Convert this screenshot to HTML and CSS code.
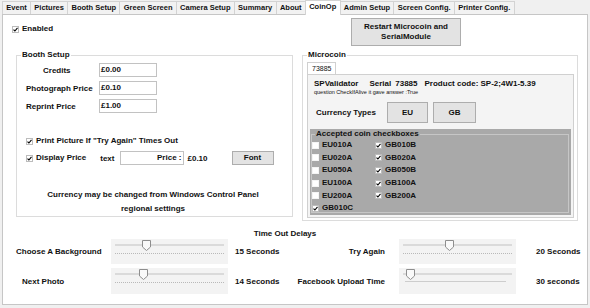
FILE: index.html
```html
<!DOCTYPE html>
<html lang="en">
<head>
    <meta charset="UTF-8">
    <title>CoinOp</title>
    <link rel="stylesheet" href="styles.css">
</head>
<body>
    <div class="tabs">
        <div class="tab">Event</div>
        <div class="tab">Pictures</div>
        <div class="tab">Booth Setup</div>
        <div class="tab">Green Screen</div>
        <div class="tab">Camera Setup</div>
        <div class="tab">Summary</div>
        <div class="tab">About</div>
        <div class="tab active">CoinOp</div>
        <div class="tab">Admin Setup</div>
        <div class="tab">Screen Config.</div>
        <div class="tab">Printer Config.</div>
    </div>

    <div class="page">
        <div class="top">
            <label class="check enabled"><span class="cb"><svg viewBox="0 0 5 5"><path d="M0.5 2.6 L1.9 4 L4.5 0.8"/></svg></span>Enabled</label>
            <button class="btn restart">Restart Microcoin and<br>SerialModule</button>

            <fieldset class="group booth">
                <legend>Booth Setup</legend>
                <div class="booth-body">
                    <div class="prices">
                        <span class="lbl credits">Credits</span><div class="input">£0.00</div>
                        <span class="lbl">Photograph Price</span><div class="input">£0.10</div>
                        <span class="lbl">Reprint Price</span><div class="input">£1.00</div>
                    </div>
                    <label class="check timeout"><span class="cb"><svg viewBox="0 0 5 5"><path d="M0.5 2.6 L1.9 4 L4.5 0.8"/></svg></span>Print Picture If "Try Again" Times Out</label>
                    <div class="display-row">
                        <label class="check"><span class="cb"><svg viewBox="0 0 5 5"><path d="M0.5 2.6 L1.9 4 L4.5 0.8"/></svg></span>Display Price</label>
                        <span class="text-lbl">text</span>
                        <div class="input price-text">Price :</div>
                        <span class="price-val">£0.10</span>
                        <button class="btn font-btn">Font</button>
                    </div>
                    <p class="note">Currency may be changed from Windows Control Panel<br>regional settings</p>
                </div>
            </fieldset>

            <fieldset class="group microcoin">
                <legend>Microcoin</legend>
                <div class="subtabs"><div class="subtab">73885</div></div>
                <div class="subpage">
                    <div class="validator">
                        <span>SPValidator</span>
                        <span class="serial">Serial</span>
                        <span class="serial-no">73885</span>
                        <span class="product">Product code: SP-2;4W1-5.39</span>
                    </div>
                    <div class="status">question CheckIfAlive it gave answer :True</div>
                    <div class="currency">
                        <span class="cur-lbl">Currency Types</span>
                        <button class="btn cur eu">EU</button>
                        <button class="btn cur gb">GB</button>
                    </div>
                    <div class="coins">
                        <fieldset class="coin-group">
                            <legend>Accepted coin checkboxes</legend>
                            <div class="coin-grid">
                                <label class="check"><span class="cb off"></span>EU010A</label>
                                <label class="check"><span class="cb"><svg viewBox="0 0 5 5"><path d="M0.5 2.6 L1.9 4 L4.5 0.8"/></svg></span>GB010B</label>
                                <label class="check"><span class="cb off"></span>EU020A</label>
                                <label class="check"><span class="cb"><svg viewBox="0 0 5 5"><path d="M0.5 2.6 L1.9 4 L4.5 0.8"/></svg></span>GB020A</label>
                                <label class="check"><span class="cb off"></span>EU050A</label>
                                <label class="check"><span class="cb"><svg viewBox="0 0 5 5"><path d="M0.5 2.6 L1.9 4 L4.5 0.8"/></svg></span>GB050B</label>
                                <label class="check"><span class="cb off"></span>EU100A</label>
                                <label class="check"><span class="cb"><svg viewBox="0 0 5 5"><path d="M0.5 2.6 L1.9 4 L4.5 0.8"/></svg></span>GB100A</label>
                                <label class="check"><span class="cb off"></span>EU200A</label>
                                <label class="check"><span class="cb"><svg viewBox="0 0 5 5"><path d="M0.5 2.6 L1.9 4 L4.5 0.8"/></svg></span>GB200A</label>
                                <label class="check"><span class="cb"><svg viewBox="0 0 5 5"><path d="M0.5 2.6 L1.9 4 L4.5 0.8"/></svg></span>GB010C</label>
                            </div>
                        </fieldset>
                    </div>
                </div>
            </fieldset>
        </div>

        <div class="delays-title">Time Out Delays</div>
        <div class="delay-grid">
            <span>Choose A Background</span>
            <div class="slider">
                <div class="track"></div>
                <div class="ticks"></div>
                <svg class="thumb" style="left: 31px" viewBox="0 0 9 11"><path d="M0.5 0.5 H8.5 V7 L4.5 10.5 L0.5 7 Z"/></svg>
            </div>
            <span class="val">15 Seconds</span>
            <span class="right-lbl">Try Again</span>
            <div class="slider">
                <div class="track"></div>
                <div class="ticks"></div>
                <svg class="thumb" style="left: 46px" viewBox="0 0 9 11"><path d="M0.5 0.5 H8.5 V7 L4.5 10.5 L0.5 7 Z"/></svg>
            </div>
            <span class="val-r">20 Seconds</span>

            <span class="next">Next Photo</span>
            <div class="slider">
                <div class="track"></div>
                <div class="ticks"></div>
                <svg class="thumb" style="left: 28px" viewBox="0 0 9 11"><path d="M0.5 0.5 H8.5 V7 L4.5 10.5 L0.5 7 Z"/></svg>
            </div>
            <span class="val">14 Seconds</span>
            <span class="right-lbl">Facebook Upload Time</span>
            <div class="slider">
                <div class="track"></div>
                <div class="ticks solid"></div>
                <svg class="thumb" style="left: 7px" viewBox="0 0 9 11"><path d="M0.5 0.5 H8.5 V7 L4.5 10.5 L0.5 7 Z"/></svg>
            </div>
            <span class="val-r">30 seconds</span>
        </div>
    </div>
</body>
</html>
```

FILE: styles.css
```css
* {
    box-sizing: border-box;
}

body {
    margin: 0;
    width: 590px;
    height: 308px;
    overflow: hidden;
    background-color: #f0f0f0;
    font-family: "Liberation Sans", Arial, sans-serif;
    font-size: 8px;
    font-weight: bold;
    color: #111;
}

/* tab strip */
.tabs {
    display: flex;
    align-items: flex-end;
    height: 14px;
    padding-left: 2px;
}

.tab {
    height: 13px;
    padding: 0 3.3px;
    margin-right: -1px;
    line-height: 12px;
    font-size: 7.5px;
    border: 1px solid #d3d3d3;
    border-bottom: none;
    background-color: #f2f2f2;
}

.tab.active {
    position: relative;
    z-index: 1;
    height: 15px;
    margin-bottom: -1px;
    line-height: 12px;
    background-color: #fff;
}

.page {
    margin: 0 2px;
    height: 291px;
    border: 1px solid #c6c6c6;
    background-color: #fff;
}

.top {
    display: grid;
    grid-template-columns: 277px 276px;
    column-gap: 9px;
    row-gap: 4px;
    padding: 3px 0 0 13px;
}

/* checkboxes */
.check {
    display: flex;
    align-items: center;
    line-height: 10px;
}

.cb {
    display: flex;
    align-items: center;
    justify-content: center;
    width: 7px;
    height: 7px;
    margin-right: 3px;
    border: 1px solid #bcbcbc;
    background-color: #fff;
}

.cb svg {
    width: 5px;
    height: 5px;
    fill: none;
    stroke: #000;
    stroke-width: 1.1;
}

.cb.off {
    border-color: #f4f4f4;
}

.enabled {
    align-self: start;
    margin: 6px 0 0 -4px;
}

/* buttons */
.btn {
    padding: 0;
    font: inherit;
    color: #111;
    line-height: 10px;
    background-color: #e3e3e3;
    border: 1px solid #adadad;
}

.restart {
    justify-self: start;
    width: 110px;
    height: 28px;
    margin-left: 49px;
}

/* group boxes */
.group {
    align-self: start;
    min-width: 0;
    margin: 0;
    padding: 0 3px 0 4px;
    border: 1px solid #dcdcdc;
}

legend {
    padding: 0 1px;
    line-height: 10px;
}

.booth {
    height: 167px;
}

.booth-body {
    padding: 3px 0 0 5px;
}

.prices {
    display: grid;
    grid-template-columns: 73px 58px;
    row-gap: 4px;
    align-items: center;
}

.credits {
    padding-left: 17px;
}

.input {
    height: 14px;
    padding-left: 1px;
    line-height: 12px;
    border: 1px solid #c2c2c2;
    background-color: #fff;
}

.timeout {
    margin-top: 23px;
}

.display-row {
    display: flex;
    align-items: center;
    height: 14px;
    margin-top: 5px;
}

.text-lbl {
    margin-left: 14px;
}

.price-text {
    width: 64px;
    margin-left: 6px;
    padding-right: 2px;
    text-align: right;
}

.price-val {
    margin-left: 3px;
}

.font-btn {
    width: 42px;
    height: 14px;
    margin-left: 24px;
}

.note {
    margin: 23px 9px 0 0;
    line-height: 14px;
    text-align: center;
}

/* microcoin */
.microcoin {
    height: 171px;
}

.subtabs {
    display: flex;
    padding-top: 2px;
}

.subtab {
    height: 12px;
    padding: 0 4px;
    line-height: 11px;
    font-size: 7px;
    font-weight: normal;
    border: 1px solid #d0d0d0;
    border-bottom: none;
    background-color: #fff;
}

.subpage {
    height: 144px;
    padding: 4px 2px 0;
    border: 1px solid #d0d0d0;
    background-color: #f4f4f4;
}

.validator {
    display: flex;
    margin-left: 4px;
    line-height: 10px;
}

.serial {
    margin-left: 11px;
}

.serial-no {
    margin-left: 4px;
}

.product {
    margin-left: 7px;
}

.status {
    margin-left: 4px;
    line-height: 7px;
    font-size: 5.5px;
    font-weight: normal;
}

.currency {
    display: flex;
    align-items: center;
    height: 21px;
    margin-top: 6px;
}

.cur-lbl {
    width: 61px;
    margin-left: 6px;
}

.cur {
    height: 21px;
}

.eu {
    width: 41px;
    margin-left: 10px;
}

.gb {
    width: 43px;
    margin-left: 5px;
}

.coins {
    height: 86px;
    margin-top: 6px;
    padding: 0 2px 2px 1px;
    background-color: #a9a9a9;
}

.coin-group {
    height: 84px;
    margin: 0;
    padding: 0;
    border: 1px solid #c6c6c6;
}

.coin-group legend {
    margin-left: 3px;
}

.coin-grid {
    display: grid;
    grid-template-columns: 63px 63px;
    grid-auto-rows: 12.6px;
    align-items: center;
}

/* time out delays */
.delays-title {
    margin-top: 8px;
    padding-right: 20px;
    line-height: 10px;
    text-align: center;
}

.delay-grid {
    display: grid;
    grid-template-columns: 95px 117px 66px 105px 117px 1fr;
    grid-template-rows: 25px 26px;
    row-gap: 4px;
    align-items: center;
    padding-left: 13px;
}

.next {
    padding-left: 6px;
}

.val {
    padding-left: 7px;
}

.right-lbl {
    padding-right: 14px;
    text-align: right;
}

.val-r {
    padding-left: 20px;
}

.slider {
    position: relative;
    align-self: stretch;
    padding: 5px 4px 0;
    background-color: #f3f3f3;
}

.track {
    height: 2px;
    background-color: #dadada;
}

.ticks {
    margin-top: 7px;
    border-top: 1px dotted #b9b9b9;
}

.ticks.solid {
    margin: 6px 6px 0 2px;
    border-top: 1px solid #cdcdcd;
}

.thumb {
    position: absolute;
    top: 1px;
    width: 9px;
    height: 11px;
    fill: #f9f9f9;
    stroke: #8e8e8e;
    stroke-width: 1;
}
```
